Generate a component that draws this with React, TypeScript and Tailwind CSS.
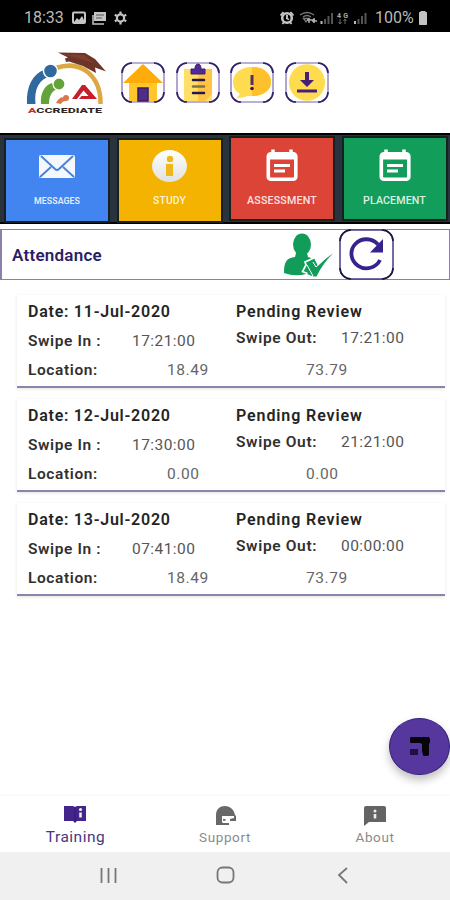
import React from "react";

const roboto = "font-[Roboto,'Liberation_Sans',sans-serif]";

function StatusBar() {
  return (
    <div className="flex h-8 shrink-0 items-center bg-black pt-[3px] text-[#b9b9b9]">
      <span className="ml-6 w-[48px] text-[16px] leading-none">18:33</span>
      <svg className="h-[14px] w-[60px]" viewBox="0 0 60 14">
        <rect x="1" y="1.5" width="12" height="10.5" rx="1" fill="none" stroke="#c4c4c4" strokeWidth="2" />
        <path d="M2 11l3-4 2 2 3-4 3 6z" fill="#c4c4c4" />
        <path d="M22 1h12v9H22z" fill="#c4c4c4" />
        <path d="M24 4h8M24 7h6" stroke="#555" strokeWidth="1" />
        <path d="M21 4v9h11" fill="none" stroke="#c4c4c4" strokeWidth="1.5" />
        <circle cx="48.500" cy="7" r="3.600" fill="none" stroke="#c4c4c4" strokeWidth="2.2" />
        <path d="M48.500 .5v2.500M48.500 11v2.500M42.800 3.700l2 1.200M52.200 9.100l2 1.200M42.800 10.300l2-1.200M52.200 4.900l2-1.200" stroke="#c4c4c4" strokeWidth="2.200" />
      </svg>
      <svg className="ml-[147px] h-[16px] w-[90px]" viewBox="0 0 90 16">
        <circle cx="8" cy="8" r="4.800" fill="none" stroke="#c4c4c4" strokeWidth="2.600" />
        <path d="M1.500 5.500l3-3.500M14.500 5.500l-3-3.500M3.500 14l1.500-2M12.500 14l-1.500-2M8 5v3.500l2 1" fill="none" stroke="#c4c4c4" strokeWidth="1.900" />
        <path d="M21 5q7-5 14 0M24 7q4-3 8 0M24.500 8.500h5L27 12z" fill="none" stroke="#777" strokeWidth="1.300" />
        <path d="M30 8v5M28 10h8M35 8v5M33 11h5" stroke="#b0b0b0" strokeWidth="1.500" />
        <path d="M42.500 11v3" stroke="#bbb" strokeWidth="2" />
        <path d="M46 9v5M49.500 6v8M53 3v11" stroke="#555" strokeWidth="2" />
        <text x="58" y="7.500" fontSize="7" fontWeight="700" fill="#aaa" textLength="11">4G</text>
        <path d="M61 9v5M59.500 12l1.500 2 1.500-2M66 14V9M64.500 11L66 9l1.500 2" fill="none" stroke="#666" strokeWidth="1" />
        <path d="M76 11v3" stroke="#bbb" strokeWidth="2" />
        <path d="M79.500 9v5M83 6v8M86.500 3v11" stroke="#555" strokeWidth="2" />
      </svg>
      <span className="ml-[6px] w-[43px] text-[16px] leading-none">100%</span>
      <svg className="h-[14px] w-[10px]" viewBox="0 0 10 14">
        <path d="M3 0h4v1.500h1.500v12h-7v-12H3z" fill="#c4c4c4" stroke="#c4c4c4" />
      </svg>
    </div>
  );
}

function Logo() {
  return (
    <svg className="h-[66px] w-[82px]" viewBox="0 0 82 66">
      <path d="M31 18C58 9 76 28 75.500 54" fill="none" stroke="#dda842" strokeWidth="4.500" />
      <path d="M33 2.500l27 .5 10 6 11 12.500-11-4 1 5.500-13-7-14-4.500-3 .5-1-3.500 3-1z" fill="#6b3528" />
      <path d="M36 4l23 1 10 8-14-4z" fill="#823e2c" />
      <path d="M2 54C1 36 8 24 19 20l7 6C14 29 9 39 10.500 54z" fill="#30699f" />
      <circle cx="25.500" cy="21" r="7" fill="#30699f" stroke="white" strokeWidth="1.400" />
      <path d="M16 54c-1-11 4-19 11-21l5 6c-5 2-8 7-8 15z" fill="#63a33a" />
      <circle cx="34" cy="34" r="6" fill="#63a33a" stroke="white" strokeWidth="1.200" />
      <path d="M31 53c2-4 4-5 6-6l4 4c-3 0-4 1-5 3z" fill="#d8784c" />
      <circle cx="41" cy="48" r="3" fill="#d8784c" />
      <path d="M47 49h5l6.500-8.500 5 5.500h-7l-2.500 3h18L60 35h-3z" fill="#c61f29" />
      <text x="3" y="63" textLength="74" lengthAdjust="spacingAndGlyphs" fontSize="7.800" fontWeight="800" fill="#302725" fontFamily="Roboto, sans-serif"><tspan fill="#bd2f2c">A</tspan>CCREDIATE</text>
    </svg>
  );
}

function Squircle() {
  return (
    <>
      <rect x="1" y="1" width="42" height="39" rx="10" fill="#fffefa" stroke="#a397c8" strokeWidth="1.700" />
      <path d="M1 11A10 10 0 0 1 11 1M33 1A10 10 0 0 1 43 11M43 30A10 10 0 0 1 33 40M11 40A10 10 0 0 1 1 30" fill="none" stroke="#2f2169" strokeWidth="1.600" />
    </>
  );
}

function HomeButton() {
  return (
    <svg className="h-[41px] w-[44px]" viewBox="0 0 44 41">
      <Squircle />
      <path d="M8 18h28v21H8z" fill="#ffc62e" />
      <path d="M22 2l20 19H2z" fill="#ffac0b" />
      <path d="M17 26h10v13H17z" fill="#502d86" stroke="#3d1b63" strokeWidth="1.500" />
    </svg>
  );
}

function ClipboardButton() {
  return (
    <svg className="h-[41px] w-[44px]" viewBox="0 0 44 41">
      <Squircle />
      <path d="M8 7h28v32H8z" fill="#ffdf68" />
      <path d="M22 7h14v25l-7 7h-7z" fill="#ffc444" />
      <path d="M15 7h4q0-5 3-5t3 5h4v5H15z" fill="#502996" stroke="#3c2076" />
      <path d="M17 18h11M17 31h11" stroke="#25164b" strokeWidth="2.500" strokeLinecap="round" />
      <path d="M17 24.500h11" stroke="#817044" strokeWidth="2.500" strokeLinecap="round" />
    </svg>
  );
}

function NoticeButton() {
  return (
    <svg className="h-[41px] w-[44px]" viewBox="0 0 44 41">
      <Squircle />
      <path d="M22 5C10 5 3 12 3 20c0 5 2 9 7 12l-3 4c5 0 8-1 10-2h5c12 0 19-6 19-14S34 5 22 5z" fill="#ffdb50" />
      <path d="M22 5c12 0 19 7 19 15s-7 14-19 14z" fill="#ffc02e" />
      <path d="M22 13v10" stroke="#513064" strokeWidth="3" />
      <circle cx="22" cy="26.500" r="1.800" fill="#3c1752" />
    </svg>
  );
}

function DownloadButton() {
  return (
    <svg className="h-[41px] w-[44px]" viewBox="0 0 44 41">
      <Squircle />
      <ellipse cx="22" cy="20.500" rx="18" ry="18.300" fill="#ffdb50" />
      <path d="M20 10h4v8h5l-7 7-7-7h5z" fill="#462078" />
      <path d="M12 29h20" stroke="#462078" strokeWidth="3" />
    </svg>
  );
}

function CalendarGlyph() {
  return (
    <svg className="h-[32px] w-[32px]" viewBox="0 0 32 32">
      <path d="M7 .5v4M25 .5v4" stroke="white" strokeWidth="3.500" />
      <rect x="2.300" y="4.700" width="27.500" height="25.500" rx="2.500" fill="none" stroke="white" strokeWidth="3.600" />
      <path d="M3 7.500h26" stroke="white" strokeWidth="6" />
      <path d="M8 16.500h16M8 22h11" stroke="white" strokeWidth="2.800" />
    </svg>
  );
}

function MailGlyph() {
  return (
    <svg className="h-[32px] w-[36px]" viewBox="0 0 36 32">
      <rect y="5" width="36" height="23" rx="2" fill="#f4f7fb" />
      <path d="M2 6l14 13q2 2 4 0L34 6M1 27l11-10M35 27L24 17" fill="none" stroke="#4b82d8" strokeWidth="1.900" />
    </svg>
  );
}

function InfoGlyph() {
  return (
    <svg className="h-[32px] w-[35px]" viewBox="0 0 35 32">
      <defs>
        <linearGradient id="disc" x2="0" y2="1"><stop stopColor="#fff" /><stop offset="1" stopColor="#e1e1df" /></linearGradient>
      </defs>
      <ellipse cx="17.500" cy="16" rx="17.500" ry="16" fill="url(#disc)" />
      <circle cx="18" cy="9" r="3.200" fill="#efb719" />
      <path d="M14 14h7v12h-7z" fill="#efb719" />
    </svg>
  );
}

type TileProps = { tone: string; label: string; textClass: string; children: React.ReactNode };

function Tile({ tone, label, textClass, children }: TileProps) {
  return (
    <div className={`flex w-[102px] flex-col items-center outline-2 outline-[#17201f] ${tone}`}>
      {children}
      <span className={`whitespace-nowrap leading-[14px] text-[#ffffffdd] ${textClass}`}>{label}</span>
    </div>
  );
}

function PersonCheck() {
  return (
    <svg className="h-[44px] w-[50px]" viewBox="0 0 50 44">
      <ellipse cx="19" cy="11.500" rx="9" ry="11" fill="#119d59" />
      <path d="M13 20l-1 4C4 25 1 28 1 40q11 4 22 1l9-14q-3-2-7-3l-1-4z" fill="#119d59" />
      <path d="M31 25l-10 4 1 3-3 7 10 4 7-8z" fill="#119d59" />
      <path d="M32 24.500l-10 4.500 1 3-3.500 6.500 5 2" fill="none" stroke="white" strokeWidth="1.700" />
      <path d="M24 32l6-2 3 4.500Q41 26 50 20.500 40 30 33.500 43.500H30z" fill="#119d59" />
      <path d="M24 32l6 11M30 29l3 5L44 24" fill="none" stroke="white" strokeWidth="1" />
    </svg>
  );
}

function RefreshButton() {
  return (
    <svg className="h-[51px] w-[55px]" viewBox="0 0 55 51">
      <rect x="1" y="1" width="53" height="49" rx="11" fill="white" stroke="#493a8a" strokeWidth="1.500" />
      <path d="M1 12A11 11 0 0 1 12 1M43 1A11 11 0 0 1 54 12M54 39A11 11 0 0 1 43 50M12 50A11 11 0 0 1 1 39" fill="none" stroke="#1e1440" strokeWidth="1.600" />
      <path d="M39 15.500A15 14.500 0 1 0 41 31" fill="none" stroke="#38238c" strokeWidth="3.800" />
      <path d="M44 10v13.500H31z" fill="#38238c" />
    </svg>
  );
}

type Entry = { date: string; inn: string; out: string; lat: string; lng: string };

const entries: Entry[] = [
  { date: "11-Jul-2020", inn: "17:21:00", out: "17:21:00", lat: "18.49", lng: "73.79" },
  { date: "12-Jul-2020", inn: "17:30:00", out: "21:21:00", lat: "0.00", lng: "0.00" },
  { date: "13-Jul-2020", inn: "07:41:00", out: "00:00:00", lat: "18.49", lng: "73.79" },
];

function EntryCard({ entry }: { entry: Entry }) {
  return (
    <article className="flex h-[93px] w-[428px] border-b-2 border-[#8b84ad] bg-white pl-[11px] shadow-[0_1px_3px_rgba(0,0,0,0.12)]">
      <div className="w-[208px] pt-[7px]">
        <div className="text-[16px] font-semibold leading-5 tracking-[0.75px] text-[#242424]">Date: {entry.date}</div>
        <div className="mt-[9px] flex leading-5">
          <span className="w-[104px] text-[15.5px] font-semibold tracking-[0.6px] text-[#303030]">Swipe In :</span>
          <span className="text-[15.5px] tracking-[0.45px] text-[#555]">{entry.inn}</span>
        </div>
        <div className="mt-[9px] flex leading-5">
          <span className="w-[139px] text-[15.5px] font-semibold tracking-[0.6px] text-[#303030]">Location:</span>
          <span className="text-[15.5px] tracking-[0.6px] text-[#666]">{entry.lat}</span>
        </div>
      </div>
      <div className="pt-[7px]">
        <div className="text-[16px] font-semibold leading-5 tracking-[0.9px] text-[#242424]">Pending Review</div>
        <div className="mt-[6px] flex leading-5">
          <span className="w-[105px] text-[15.5px] font-semibold tracking-[0.65px] text-[#303030]">Swipe Out:</span>
          <span className="text-[15.5px] tracking-[0.45px] text-[#555]">{entry.out}</span>
        </div>
        <div className="mt-[12px] pl-[70px] text-[15.5px] leading-5 tracking-[0.6px] text-[#666]">{entry.lng}</div>
      </div>
    </article>
  );
}

function BottomNav() {
  return (
    <nav className="grid h-[56px] shrink-0 grid-cols-3 bg-white pt-[9px] text-[#8b8b8b] shadow-[0_-1px_2px_rgba(0,0,0,0.04)]">
      <div className="flex flex-col items-center text-[#493780]">
        <svg className="h-[20px] w-[24px]" viewBox="0 0 24 20">
          <path d="M1 1h9l2 1 2-1h9v15h-9l-2 2-2-2H1z" fill="#43268b" />
          <path d="M12 2v15" stroke="#30176b" />
          <circle cx="17.500" cy="4.500" r="1.600" fill="#eee" /><path d="M17.500 7.500v5" stroke="#eee" strokeWidth="2.600" />
        </svg>
        <span className="mt-[2px] pl-px text-[15.500px] leading-5 tracking-[0.5px]">Training</span>
      </div>
      <div className="flex flex-col items-center">
        <svg className="h-[21px] w-[24px]" viewBox="0 0 24 21">
          <path d="M3 20V10C3-2 20-2 22 10l1 1v5h-6v-2l4-1v-2H9v6l1 1h6v2z" fill="#686868" />
          <path d="M10 14h2.500v1.800H10z" fill="#686868" />
        </svg>
        <span className="mt-px text-[13.5px] leading-5 tracking-[0.6px]">Support</span>
      </div>
      <div className="flex flex-col items-center">
        <svg className="h-[21px] w-[24px]" viewBox="0 0 24 21">
          <path d="M1 3q0-2 2-2h18q2 0 2 2v14H6l-5 4z" fill="#646464" />
          <circle cx="12" cy="6" r="1.500" fill="#eee" /><path d="M12 9v4.500" stroke="#eee" strokeWidth="2.600" />
        </svg>
        <span className="mt-px text-[13.5px] leading-5 tracking-[0.6px]">About</span>
      </div>
    </nav>
  );
}

export default function App() {
  return (
    <div className={`relative flex h-[900px] w-[450px] flex-col overflow-hidden bg-white ${roboto}`}>
      <StatusBar />
      <header className="flex h-[101px] shrink-0 pl-[25px] pt-[18px]">
        <Logo />
        <div className="ml-[14px] flex gap-[10.600px] pt-[12px]">
          <HomeButton />
          <ClipboardButton />
          <NoticeButton />
          <DownloadButton />
        </div>
      </header>
      <section className="flex h-[91px] shrink-0 gap-[10.500px] border-y-2 border-black bg-[#29333d] pl-[6px] pt-[3px]">
        <Tile tone="mt-[2px] h-[81px] pt-[10px] bg-[#4285f0]" label="MESSAGES" textClass="mt-[12px] text-[8.8px] font-semibold tracking-[0.05px]"><MailGlyph /></Tile>
        <Tile tone="mt-[2px] h-[81px] pt-[10px] bg-[#f3b300]" label="STUDY" textClass="mt-[12px] text-[10.3px] font-medium tracking-[0.2px]"><InfoGlyph /></Tile>
        <Tile tone="h-[81px] pt-[11px] bg-[#dc4437]" label="ASSESSMENT" textClass="mt-[13px] text-[10.7px] font-medium tracking-[0.15px]"><CalendarGlyph /></Tile>
        <Tile tone="h-[81px] pt-[11px] bg-[#129e5a]" label="PLACEMENT" textClass="mt-[13px] text-[10.7px] font-medium tracking-[0.1px]"><CalendarGlyph /></Tile>
      </section>
      <section className="mt-[5px] flex h-[51px] shrink-0 border border-l-2 border-[#8b80ac] pl-[10px]">
        <h1 className="w-[271px] pt-[15px] text-[17px] font-semibold leading-5 tracking-[0.25px] text-[#2b1e65]">Attendance</h1>
        <div className="pt-[3px]"><PersonCheck /></div>
        <div className="-mt-px ml-[6px]"><RefreshButton /></div>
      </section>
      <main className="flex grow flex-col gap-[11px] pl-[17px] pt-[15px]">
        {entries.map((entry) => <EntryCard key={entry.date} entry={entry} />)}
      </main>
      <BottomNav />
      <footer className="flex h-12 shrink-0 items-center bg-[#f0f0f0]">
        <svg className="h-12 w-full" viewBox="0 0 450 48" fill="none" stroke="#777" strokeWidth="1.800">
          <path d="M101.500 16v15M108.500 16v15M115.500 16v15" />
          <rect x="217.500" y="15.500" width="16" height="15" rx="5" />
          <path d="M347 16l-8 7 8 8" />
        </svg>
      </footer>
      <button className="absolute left-[389px] top-[718px] flex h-[57px] w-[61px] items-center justify-center rounded-[50%] border border-[#37217b] bg-[#55379d] shadow-[0_5px_8px_rgba(0,0,0,0.25)]">
        <svg className="h-[21px] w-[22px]" viewBox="0 0 22 21">
          <path d="M1 2q0-1 1-1h18l1 2v3l-1 2v11q-1 1-2 1h-3q-1 0-1-1l-1-4V8l-2-1H2Q1 7 1 5z" fill="#07050a" />
          <path d="M1 13h8v6H1z" fill="#211044" />
        </svg>
      </button>
    </div>
  );
}
